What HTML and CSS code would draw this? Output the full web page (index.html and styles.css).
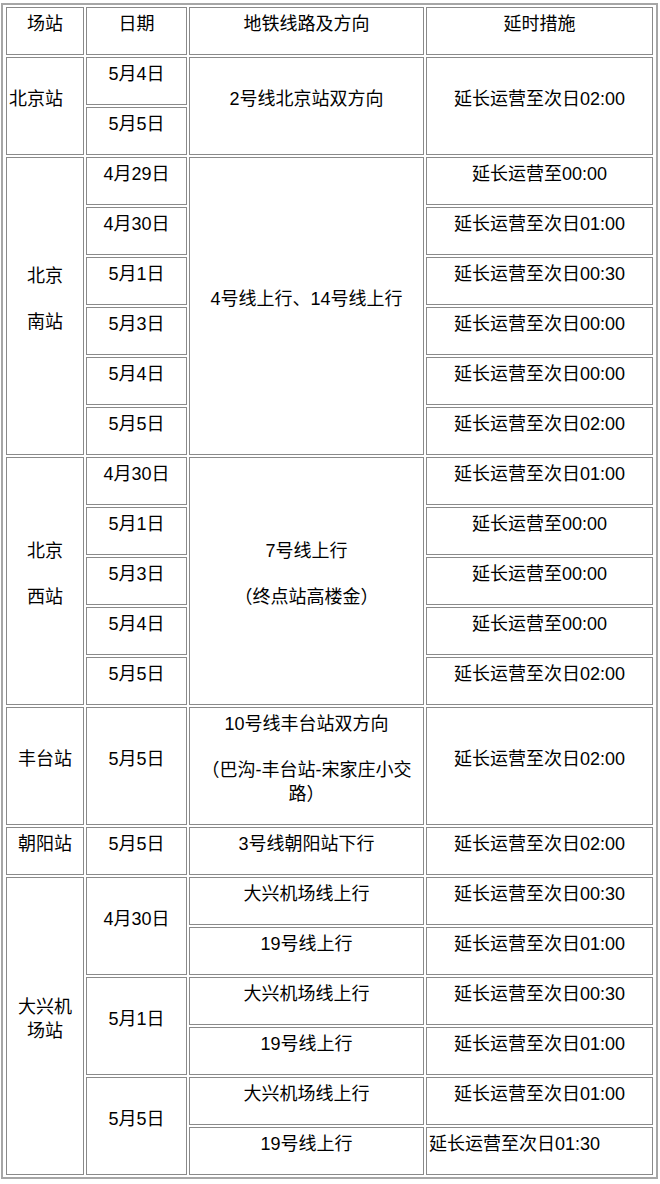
FILE: index.html
```html
<!DOCTYPE html>
<html lang="zh-CN">
<head>
<meta charset="utf-8">
<title>延时运营安排</title>
<link rel="stylesheet" href="styles.css">
</head>
<body>
<table class="sched">
  <colgroup>
    <col class="c1"><col class="c2"><col class="c3"><col class="c4">
  </colgroup>
  <tbody>
    <tr>
      <td><p>场站</p></td>
      <td><p>日期</p></td>
      <td><p>地铁线路及方向</p></td>
      <td><p>延时措施</p></td>
    </tr>

    <tr>
      <td rowspan="2" class="left"><p>北京站</p></td>
      <td><p>5月4日</p></td>
      <td rowspan="2"><p>2号线北京站双方向</p></td>
      <td rowspan="2"><p>延长运营至次日02:00</p></td>
    </tr>
    <tr>
      <td><p>5月5日</p></td>
    </tr>

    <tr>
      <td rowspan="6"><p>北京</p><p>南站</p></td>
      <td><p>4月29日</p></td>
      <td rowspan="6"><p>4号线上行、14号线上行</p></td>
      <td><p>延长运营至00:00</p></td>
    </tr>
    <tr><td><p>4月30日</p></td><td><p>延长运营至次日01:00</p></td></tr>
    <tr><td><p>5月1日</p></td><td><p>延长运营至次日00:30</p></td></tr>
    <tr><td><p>5月3日</p></td><td><p>延长运营至次日00:00</p></td></tr>
    <tr><td><p>5月4日</p></td><td><p>延长运营至次日00:00</p></td></tr>
    <tr><td><p>5月5日</p></td><td><p>延长运营至次日02:00</p></td></tr>

    <tr>
      <td rowspan="5"><p>北京</p><p>西站</p></td>
      <td><p>4月30日</p></td>
      <td rowspan="5"><p>7号线上行</p><p>（终点站高楼金）</p></td>
      <td><p>延长运营至次日01:00</p></td>
    </tr>
    <tr><td><p>5月1日</p></td><td><p>延长运营至00:00</p></td></tr>
    <tr><td><p>5月3日</p></td><td><p>延长运营至00:00</p></td></tr>
    <tr><td><p>5月4日</p></td><td><p>延长运营至00:00</p></td></tr>
    <tr><td><p>5月5日</p></td><td><p>延长运营至次日02:00</p></td></tr>

    <tr>
      <td><p>丰台站</p></td>
      <td><p>5月5日</p></td>
      <td><p>10号线丰台站双方向</p><p>（巴沟-丰台站-宋家庄小交路）</p></td>
      <td><p>延长运营至次日02:00</p></td>
    </tr>

    <tr>
      <td><p>朝阳站</p></td>
      <td><p>5月5日</p></td>
      <td><p>3号线朝阳站下行</p></td>
      <td><p>延长运营至次日02:00</p></td>
    </tr>

    <tr>
      <td rowspan="6" class="narrow"><p>大兴机场站</p></td>
      <td rowspan="2"><p>4月30日</p></td>
      <td><p>大兴机场线上行</p></td>
      <td><p>延长运营至次日00:30</p></td>
    </tr>
    <tr><td><p>19号线上行</p></td><td><p>延长运营至次日01:00</p></td></tr>
    <tr>
      <td rowspan="2"><p>5月1日</p></td>
      <td><p>大兴机场线上行</p></td>
      <td><p>延长运营至次日00:30</p></td>
    </tr>
    <tr><td><p>19号线上行</p></td><td><p>延长运营至次日01:00</p></td></tr>
    <tr>
      <td rowspan="2"><p>5月5日</p></td>
      <td><p>大兴机场线上行</p></td>
      <td><p>延长运营至次日01:00</p></td>
    </tr>
    <tr><td><p>19号线上行</p></td><td class="left"><p>延长运营至次日01:30</p></td></tr>
  </tbody>
</table>
</body>
</html>
```

FILE: styles.css
```css
html, body {
  margin: 0;
  padding: 0;
  background: #fff;
}

body {
  font-family: "Liberation Sans", "Noto Sans CJK SC", sans-serif;
  font-size: 18px;
  color: #000;
}

.sched {
  margin: 3px 0 0 1px;
  width: 657px;
  table-layout: fixed;
  border-collapse: separate;
  border-spacing: 2px;
  padding: 0 1px;
  border: 2px solid #a6a6a6;
}

.sched .c1 { width: 78px; }
.sched .c2 { width: 101px; }
.sched .c3 { width: 235px; }
.sched .c4 { width: 227px; }

.sched td {
  border: 1px solid #8a8a8a;
  padding: 0;
  text-align: center;
  vertical-align: middle;
}

.sched td p {
  margin: 0 0 18px;
  padding-top: 4px;
  line-height: 24px;
}

.sched td.left {
  text-align: left;
}

.sched td.left p {
  padding-left: 2px;
}

.sched td.narrow p {
  padding-left: 4px;
  padding-right: 4px;
}
```
